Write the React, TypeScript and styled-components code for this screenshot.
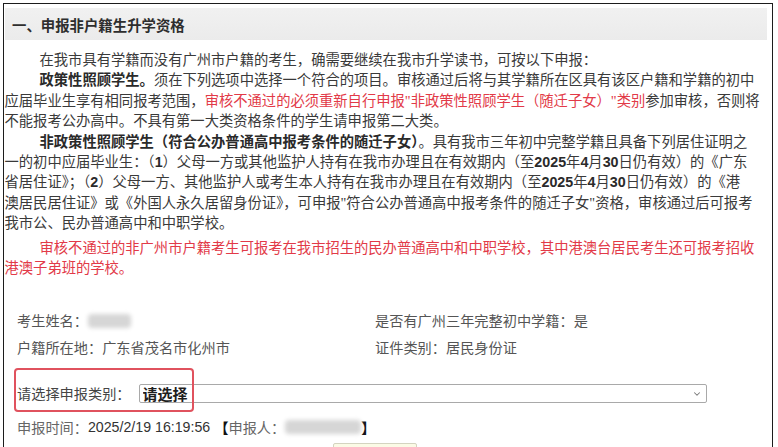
import React from "react";
import styled, { createGlobalStyle } from "styled-components";
import { ChevronDown } from "lucide-react";

const GlobalStyle = createGlobalStyle`
  html, body {
    margin: 0;
    padding: 0;
    background: #ffffff;
    overflow: hidden;
  }
  body {
    font-family: "Liberation Serif", "Noto Sans CJK SC", serif;
    color: #3a3a3a;
  }
`;

const Frame = styled.div`
  margin: 3px 0 0 3px;
  width: 770px;
  height: 460px;
  box-sizing: border-box;
  border: 1px solid #1c1c1c;
  border-bottom: none;
`;

const Header = styled.div`
  margin: 4px 5px 0 1px;
  height: 32px;
  padding-left: 7px;
  display: flex;
  align-items: center;
  background: linear-gradient(#f1f1f1, #ebebeb);
  font-family: "Noto Sans CJK SC", sans-serif;
  font-size: 14.4px;
  font-weight: 700;
  color: #2e2e2e;
`;

const Notice = styled.div`
  margin-top: 10px;
  padding-left: 0.5px;
`;

const Para = styled.div<{ $red?: boolean }>`
  margin-top: ${(p) => (p.$red ? "4px" : "0")};
  color: ${(p) => (p.$red ? "#e23a48" : "#3a3a3a")};
  font-size: 14.3px;
  line-height: 20.4px;
`;

const Line = styled.div<{ $indent?: boolean }>`
  white-space: nowrap;
  padding-left: ${(p) => (p.$indent ? "35px" : "0")};
`;

const Strong = styled.b`
  font-weight: 700;
  color: #2a2a2a;
`;

const Red = styled.span`
  color: #e23a48;
`;

const Num = styled.span`
  font-family: "Liberation Sans", sans-serif;
  font-weight: 700;
  color: #2a2a2a;
`;

const InfoGrid = styled.div`
  margin-top: 33px;
  padding-left: 13px;
  display: grid;
  grid-template-columns: 358px auto;
  row-gap: 7px;
  font-size: 14.2px;
  line-height: 20px;
  color: #555555;
`;

const InfoCell = styled.div`
  display: flex;
  align-items: center;
  white-space: nowrap;
`;

const Blur = styled.span<{ $w: number }>`
  display: inline-block;
  width: ${(p) => p.$w}px;
  height: 14px;
  border-radius: 4px;
  background: #d6d6d6;
  filter: blur(2px);
`;

const SelectRow = styled.div`
  position: relative;
  margin-top: 10px;
  height: 44px;
  box-sizing: border-box;
  padding: 6px 0 0 13px;
  display: flex;
  align-items: center;
  gap: 8px;
  font-size: 14.2px;
  color: #444444;
`;

const Highlight = styled.div`
  position: absolute;
  left: 10px;
  top: 0;
  width: 180px;
  height: 44px;
  box-sizing: border-box;
  border: 2px solid #e0525e;
  border-radius: 4px;
  pointer-events: none;
`;

const SelectWrap = styled.div`
  position: relative;
  width: 568px;
  height: 19px;
`;

const Select = styled.select`
  appearance: none;
  width: 100%;
  height: 100%;
  box-sizing: border-box;
  margin: 0;
  padding: 0 0 0 3px;
  border: 1px solid #a9a9a9;
  border-radius: 2px;
  background: #ffffff;
  font-family: "Noto Sans CJK SC", sans-serif;
  font-size: 15px;
  font-weight: 600;
  line-height: 17px;
  color: #1e1e1e;
`;

const Chevron = styled(ChevronDown)`
  position: absolute;
  right: 5px;
  top: 5px;
  color: #777777;
  pointer-events: none;
`;

const TimeRow = styled.div`
  margin-top: 5px;
  padding-left: 13px;
  height: 20px;
  display: flex;
  align-items: center;
  white-space: nowrap;
  font-size: 14.2px;
  color: #666666;
`;

const Stamp = styled.span`
  font-family: "Liberation Sans", sans-serif;
  font-size: 14.2px;
  color: #333333;
  margin-right: 4px;
`;

const Bracket = styled.span`
  font-weight: 700;
  color: #111111;
`;

const ButtonRow = styled.div`
  margin-top: 6px;
  padding-left: 329px;
  display: flex;
`;

const Button = styled.div`
  width: 84px;
  height: 26px;
  box-sizing: border-box;
  border: 1px solid #d4d4c0;
  border-radius: 2px;
  background: #fbfbe6;
`;

export default function App() {
  return (
    <>
      <GlobalStyle />
      <Frame>
        <Header>一、申报非户籍生升学资格</Header>
        <Notice>
          <Para>
            <Line $indent>在我市具有学籍而没有广州市户籍的考生，确需要继续在我市升学读书，可按以下申报：</Line>
            <Line $indent>
              <Strong>政策性照顾学生。</Strong>须在下列选项中选择一个符合的项目。审核通过后将与其学籍所在区具有该区户籍和学籍的初中
            </Line>
            <Line>
              应届毕业生享有相同报考范围，<Red>审核不通过的必须重新自行申报"非政策性照顾学生（随迁子女）"类别</Red>参加审核，否则将
            </Line>
            <Line>不能报考公办高中。不具有第一大类资格条件的学生请申报第二大类。</Line>
            <Line $indent>
              <Strong>非政策性照顾学生（符合公办普通高中报考条件的随迁子女）</Strong>。具有我市三年初中完整学籍且具备下列居住证明之
            </Line>
            <Line>
              一的初中应届毕业生：（<Num>1</Num>）父母一方或其他监护人持有在我市办理且在有效期内（至<Num>2025</Num>年<Num>4</Num>月<Num>30</Num>日仍有效）的《广东
            </Line>
            <Line>
              省居住证》；（<Num>2</Num>）父母一方、其他监护人或考生本人持有在我市办理且在有效期内（至<Num>2025</Num>年<Num>4</Num>月<Num>30</Num>日仍有效）的《港
            </Line>
            <Line>澳居民居住证》或《外国人永久居留身份证》，可申报"符合公办普通高中报考条件的随迁子女"资格，审核通过后可报考</Line>
            <Line>我市公、民办普通高中和中职学校。</Line>
          </Para>
          <Para $red>
            <Line $indent>审核不通过的非广州市户籍考生可报考在我市招生的民办普通高中和中职学校，其中港澳台居民考生还可报考招收</Line>
            <Line>港澳子弟班的学校。</Line>
          </Para>
        </Notice>

        <InfoGrid>
          <InfoCell>
            考生姓名：<Blur $w={43} />
          </InfoCell>
          <InfoCell>是否有广州三年完整初中学籍：是</InfoCell>
          <InfoCell>户籍所在地：广东省茂名市化州市</InfoCell>
          <InfoCell>证件类别：居民身份证</InfoCell>
        </InfoGrid>

        <SelectRow>
          <span>请选择申报类别：</span>
          <SelectWrap>
            <Select defaultValue="">
              <option value="">请选择</option>
            </Select>
            <Chevron size={10} strokeWidth={2.5} />
          </SelectWrap>
          <Highlight />
        </SelectRow>

        <TimeRow>
          申报时间：<Stamp>2025/2/19 16:19:56</Stamp>
          <Bracket>【</Bracket>申报人：<Blur $w={76} />
          <Bracket>】</Bracket>
        </TimeRow>

        <ButtonRow>
          <Button />
        </ButtonRow>
      </Frame>
    </>
  );
}
